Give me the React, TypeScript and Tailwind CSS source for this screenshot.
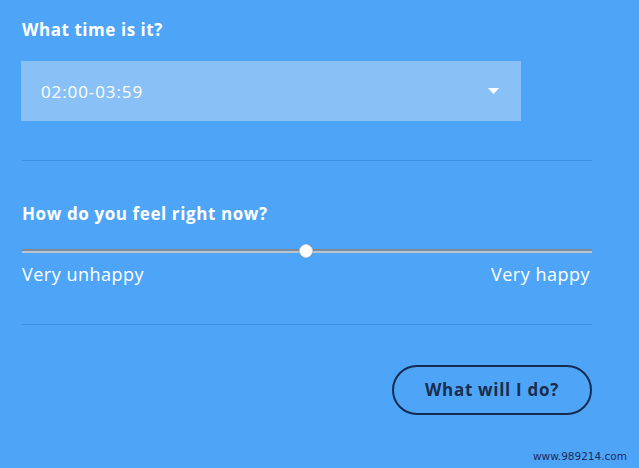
import React from "react";

export default function App() {
  return (
    <div
      className="relative w-[639px] h-[468px] bg-[#4ea5f8] overflow-hidden"
      style={{ fontFamily: '"Open Sans", "Liberation Sans", sans-serif' }}
    >
      <div className="flex flex-col pl-[22px] pr-[47px] pt-[19px]">
        <h2 className="text-white font-bold text-[17px] leading-[22px] tracking-[0.55px]">What time is it?</h2>
        <div className="mt-[20px] ml-[-1px] w-[500px] h-[60px] bg-[#89c1f7] flex items-center justify-between pl-[20px] pr-[21px]">
          <span className="text-white text-[17px] leading-none tracking-[0.9px]">02:00-03:59</span>
          <svg width="11" height="6" viewBox="0 0 11 6" className="mr-[1px]">
            <polygon points="0,0 11,0 5.5,6" fill="#ffffff" />
          </svg>
        </div>
        <div className="mt-[39px] h-px bg-[#3d8fdf]" />
        <h2 className="mt-[42px] text-white font-bold text-[17px] leading-[22px] tracking-[0.6px]">How do you feel right now?</h2>
        <div className="relative mt-[19px] h-[14px] flex items-center">
          <div className="w-full h-[4px] flex">
            <div className="flex-1 border-t-2 border-[#7d8a9c] bg-[#b9c2cd]" />
          </div>
          <div className="absolute left-[277px] top-0 w-[14px] h-[14px] rounded-full bg-white border border-[#c9d0d8] shadow-[0_0_1px_rgba(0,0,0,0.3)]" />
        </div>
        <div className="mt-[4px] flex justify-between text-white text-[18px] leading-[24px] tracking-[0.5px]">
          <span>Very unhappy</span>
          <span className="mr-[2px]">Very happy</span>
        </div>
        <div className="mt-[38px] h-px bg-[#3d8fdf]" />
        <div className="mt-[40px] flex justify-end">
          <button className="w-[200px] h-[50px] rounded-full border-[2.5px] border-[#142a4e] text-[#1a2d4d] font-bold text-[17px] tracking-[0.7px]">
            What will I do?
          </button>
        </div>
      </div>
      <div
        className="absolute left-[533px] top-[449px] text-[#1c2b5c] text-[10.5px] leading-[14px]"
        style={{ fontFamily: '"DejaVu Sans", sans-serif' }}
      >
        www.989214.com
      </div>
    </div>
  );
}
